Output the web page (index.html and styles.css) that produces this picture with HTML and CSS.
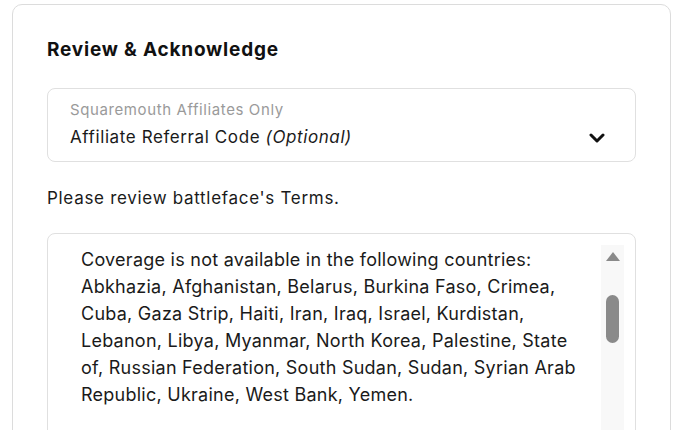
FILE: index.html
```html
<!DOCTYPE html>
<html lang="en">
<head>
  <meta charset="UTF-8" />
  <meta name="viewport" content="width=device-width, initial-scale=1.0"/>
  <title>Review &amp; Acknowledge</title>
  <link rel="stylesheet" href="styles.css">
</head>
<body>
  <section class="card">
    <h2>Review &amp; Acknowledge</h2>

    <div class="select">
      <div class="select-text">
        <span class="hint">Squaremouth Affiliates Only</span>
        <span class="value">Affiliate Referral Code <em>(Optional)</em></span>
      </div>
      <svg class="chev" width="16" height="12" viewBox="0 0 16 12" aria-hidden="true">
        <path d="M2 3l6 6 6-6" fill="none" stroke="#111" stroke-width="3" stroke-linecap="round" stroke-linejoin="round"/>
      </svg>
    </div>

    <p class="note">Please review battleface's Terms.</p>

    <div class="terms">
      <div class="terms-text">
        <p>Coverage is not available in the following countries: Abkhazia, Afghanistan, Belarus, Burkina Faso, Crimea, Cuba, Gaza Strip, Haiti, Iran, Iraq, Israel, Kurdistan, Lebanon, Libya, Myanmar, North Korea, Palestine, State of, Russian Federation, South Sudan, Sudan, Syrian Arab Republic, Ukraine, West Bank, Yemen.</p>
      </div>
      <div class="scrollbar">
        <span class="arrow"></span>
        <span class="thumb"></span>
      </div>
    </div>
  </section>
</body>
</html>
```

FILE: styles.css
```css
*{margin:0;padding:0;box-sizing:border-box}
body{font-family:Inter,'Noto Sans',sans-serif;background:#fff;color:#1a1a1a;padding:4px 21px 0 12px;height:430px;overflow:hidden}
.card{border:1px solid #dcdcdc;border-radius:10px;padding:32px 34px 40px 34px;height:500px}
.card h2{font-size:19px;font-weight:700;color:#111;line-height:26px;letter-spacing:0.8px}
.select{margin-top:25px;border:1px solid #e0e0e0;border-radius:8px;height:74px;display:flex;align-items:center;justify-content:space-between;padding:0 30px 0 22px}
.select-text{display:flex;flex-direction:column}
.hint{font-size:15px;color:#9a9a9a;line-height:22px;letter-spacing:0.6px;margin-top:-2px}
.value{font-size:17px;color:#1a1a1a;line-height:26px;letter-spacing:0.6px;margin-top:3px}
.value em{font-style:italic}
.chev{margin-top:26px}
.note{margin-top:24px;font-size:17px;line-height:24px;color:#1a1a1a;letter-spacing:0.7px}
.terms{margin-top:23px;border:1px solid #e0e0e0;border-radius:8px;display:flex;padding:11px 11px 0 33px;height:240px}
.terms-text{flex:1;padding-top:1px;padding-right:16px}
.terms-text p{font-size:18px;line-height:27px;color:#1a1a1a;letter-spacing:0.25px}
.scrollbar{width:23px;background:#f8f8f8;display:flex;flex-direction:column;align-items:center}
.arrow{margin-top:7px;width:0;height:0;border-left:7px solid transparent;border-right:7px solid transparent;border-bottom:9px solid #8a8a8a}
.thumb{margin-top:34px;width:13px;height:48px;border-radius:7px;background:#8a8a8a}
```
